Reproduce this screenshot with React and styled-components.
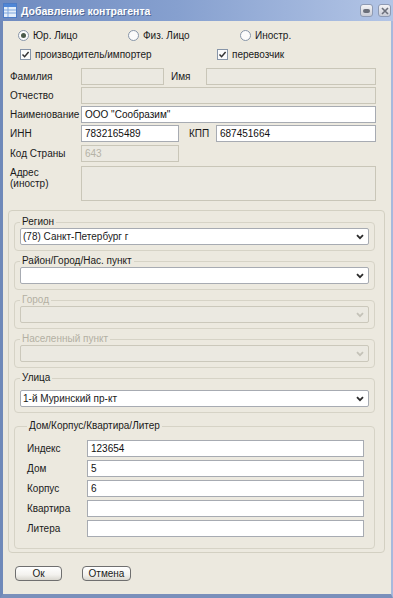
import React from "react";
import styled, { createGlobalStyle } from "styled-components";

const GlobalStyle = createGlobalStyle`
  html, body {
    margin: 0;
    padding: 0;
    background: #ffffff;
  }
  body {
    font-family: "Liberation Sans", Arial, sans-serif;
    font-size: 10px;
    color: #1a1a1a;
  }
`;

const Window = styled.div`
  width: 393px;
  height: 598px;
  display: flex;
  flex-direction: column;
  background: #ece9df;
`;

const TitleBar = styled.div`
  height: 21px;
  flex: none;
  display: flex;
  align-items: center;
  padding: 0 2px 0 3px;
  gap: 4px;
  background: linear-gradient(to right, #6f8bc0 0%, #86a0cf 45%, #b3c5e6 100%);
`;

const Title = styled.div`
  flex: 1;
  color: #ffffff;
  font-weight: 700;
  font-size: 10.5px;
  text-shadow: 1px 1px 0 rgba(40, 60, 100, 0.5);
`;

const TitleButton = styled.div`
  width: 13px;
  height: 13px;
  border-radius: 3px;
  background: linear-gradient(#f4f4f6, #c9ccd6);
  border: 1px solid #8e9ab3;
  box-sizing: border-box;
  display: flex;
  align-items: center;
  justify-content: center;
  margin-left: 1px;
`;

const Frame = styled.div`
  flex: 1;
  display: flex;
  flex-direction: column;
  border-left: 3px solid #6f89b9;
  border-right: 2px solid #a7b9dc;
  border-bottom: 4px solid #7a90bb;
  padding: 0 6px 0 5px;
`;

const OptionRow = styled.div`
  display: grid;
  grid-template-columns: ${(p) => p.$cols};
  align-items: center;
  height: 14px;
  margin-left: ${(p) => p.$left}px;
  margin-top: ${(p) => p.$top}px;
`;

const Option = styled.div`
  display: flex;
  align-items: center;
  gap: 4px;
  white-space: nowrap;
`;

const Radio = styled.span`
  width: 11px;
  height: 11px;
  box-sizing: border-box;
  border-radius: 50%;
  border: 1px solid #8795a8;
  background: #fbfbfb;
  display: flex;
  align-items: center;
  justify-content: center;
  &::after {
    content: "";
    width: 5px;
    height: 5px;
    border-radius: 50%;
    background: ${(p) => (p.$on ? "#4a5a4a" : "transparent")};
  }
`;

const Check = styled.span`
  width: 11px;
  height: 11px;
  box-sizing: border-box;
  border: 1px solid #8795a8;
  background: #fbfbfb;
  display: flex;
  align-items: center;
  justify-content: center;
`;

const Form = styled.div`
  display: flex;
  flex-direction: column;
  gap: 2px;
  margin: 7px 9px 0 2px;
`;

const Row = styled.div`
  display: flex;
  align-items: ${(p) => (p.$top ? "flex-start" : "center")};
  margin-top: ${(p) => p.$mt || 0}px;
`;

const Label = styled.div`
  flex: none;
  width: ${(p) => p.$w}px;
  padding-left: ${(p) => p.$pl || 0}px;
  box-sizing: border-box;
  line-height: 11px;
  padding-top: ${(p) => p.$pt || 0}px;
`;

const Field = styled.div`
  box-sizing: border-box;
  height: ${(p) => p.$h || 17}px;
  width: ${(p) => (p.$w ? `${p.$w}px` : "auto")};
  flex: ${(p) => (p.$w ? "none" : 1)};
  border: 1px solid ${(p) => (p.$disabled ? "#c9c6b8" : "#a7abb2")};
  background: ${(p) => (p.$disabled ? "#ebe9e1" : "#ffffff")};
  color: ${(p) => (p.$disabled ? "#b5b2a6" : "#111111")};
  padding: 0 3px;
  display: flex;
  align-items: center;
  white-space: nowrap;
`;

const Outer = styled.div`
  margin-top: 9px;
  border: 1px solid #d3d0c2;
  border-radius: 4px;
  padding: 5px 9px 3px 5px;
  display: flex;
  flex-direction: column;
  gap: 4px;
`;

const Group = styled.fieldset`
  margin: ${(p) => p.$mt || 0}px 0 0 0;
  padding: ${(p) => p.$pt || 0}px ${(p) => p.$pr || 5}px ${(p) => p.$pb || 5}px ${(p) => p.$pl || 5}px;
  border: 1px solid #d6d3c6;
  border-radius: 4px;
  min-width: 0;
`;

const Legend = styled.legend`
  padding: 0 2px;
  line-height: 12px;
  color: ${(p) => (p.$disabled ? "#b3b0a3" : "#1a1a1a")};
`;

const Select = styled.div`
  box-sizing: border-box;
  height: 17px;
  border: 1px solid ${(p) => (p.$disabled ? "#cbc8bb" : "#a7abb2")};
  border-radius: 2px;
  background: ${(p) => (p.$disabled ? "#ebe9e1" : "#ffffff")};
  display: flex;
  align-items: center;
  padding: 0 4px 0 2px;
  white-space: nowrap;
`;

const SelectText = styled.span`
  flex: 1;
`;

const HouseRows = styled.div`
  display: flex;
  flex-direction: column;
  gap: 3px;
`;

const Buttons = styled.div`
  display: flex;
  gap: 20px;
  margin: 13px 0 0 7px;
`;

const Button = styled.div`
  width: ${(p) => p.$w}px;
  height: 15px;
  box-sizing: border-box;
  border: 1px solid #6f6f6f;
  border-radius: 4px;
  background: linear-gradient(#ffffff 0%, #f3f2ee 60%, #d9d7cf 100%);
  display: flex;
  align-items: center;
  justify-content: center;
  font-size: 10px;
`;

const Chevron = ({ disabled }) => (
  <svg width="8" height="6" viewBox="0 0 8 6">
    <path
      d="M1 1.2 L4 4.2 L7 1.2"
      fill="none"
      stroke={disabled ? "#c4c2b8" : "#2b2b2b"}
      strokeWidth="1.8"
    />
  </svg>
);

const Tick = () => (
  <svg width="9" height="9" viewBox="0 0 9 9">
    <path d="M1.5 4.5 L3.6 6.7 L7.6 2" fill="none" stroke="#333" strokeWidth="1.5" />
  </svg>
);

const AppIcon = () => (
  <svg width="14" height="15" viewBox="0 0 14 15">
    <rect x="0.5" y="0.5" width="13" height="14" fill="#e4eefa" stroke="#4d7cc7" />
    <rect x="1" y="1" width="12" height="3" fill="#4f86d6" />
    <path d="M1 7 H13 M1 10 H13 M5 4 V14" stroke="#7fa6dd" strokeWidth="1" />
  </svg>
);

const Combo = ({ legend, value, disabled, pt }) => (
  <Group $pt={pt}>
    <Legend $disabled={disabled}>{legend}</Legend>
    <Select $disabled={disabled}>
      <SelectText>{value}</SelectText>
      <Chevron disabled={disabled} />
    </Select>
  </Group>
);

const houseFields = [
  ["Индекс", "123654"],
  ["Дом", "5"],
  ["Корпус", "6"],
  ["Квартира", ""],
  ["Литера", ""],
];

export default function App() {
  return (
    <>
      <GlobalStyle />
      <Window>
        <TitleBar>
          <AppIcon />
          <Title>Добавление контрагента</Title>
          <TitleButton>
            <svg width="7" height="4" viewBox="0 0 7 4">
              <rect x="0" y="0" width="7" height="4" rx="2" fill="#6b6f7a" />
            </svg>
          </TitleButton>
          <TitleButton>
            <svg width="8" height="8" viewBox="0 0 8 8">
              <path d="M1 1 L7 7 M7 1 L1 7" stroke="#6b6f7a" strokeWidth="1.6" />
            </svg>
          </TitleButton>
        </TitleBar>
        <Frame>
          <OptionRow $cols="110px 112px auto" $left={10} $top={7}>
            <Option>
              <Radio $on />
              Юр. Лицо
            </Option>
            <Option>
              <Radio />
              Физ. Лицо
            </Option>
            <Option>
              <Radio />
              Иностр.
            </Option>
          </OptionRow>
          <OptionRow $cols="197px auto" $left={12} $top={5}>
            <Option>
              <Check>
                <Tick />
              </Check>
              производитель/импортер
            </Option>
            <Option>
              <Check>
                <Tick />
              </Check>
              перевозчик
            </Option>
          </OptionRow>

          <Form>
            <Row>
              <Label $w={71}>Фамилия</Label>
              <Field $w={83} $disabled />
              <Label $w={42} $pl={7}>
                Имя
              </Label>
              <Field $disabled />
            </Row>
            <Row>
              <Label $w={71}>Отчество</Label>
              <Field $disabled />
            </Row>
            <Row>
              <Label $w={71}>Наименование</Label>
              <Field>ООО "Сообразим"</Field>
            </Row>
            <Row>
              <Label $w={71}>ИНН</Label>
              <Field $w={98}>7832165489</Field>
              <Label $w={37} $pl={10}>
                КПП
              </Label>
              <Field>687451664</Field>
            </Row>
            <Row $mt={1}>
              <Label $w={71}>Код Страны</Label>
              <Field $w={98} $disabled>
                643
              </Field>
            </Row>
            <Row $top $mt={2}>
              <Label $w={71} $pt={1}>
                Адрес
                <br />
                (иностр)
              </Label>
              <Field $disabled $h={35} />
            </Row>
          </Form>

          <Outer>
            <Combo legend="Регион" value="(78) Санкт-Петербург г" />
            <Combo legend="Район/Город/Нас. пункт" value="" />
            <Combo legend="Город" value="" disabled />
            <Combo legend="Населенный пункт" value="" disabled />
            <Combo legend="Улица" value="1-й Муринский пр-кт" pt={6} />
            <Group $mt={3} $pt={8} $pl={12} $pr={10} $pb={11}>
              <Legend>Дом/Корпус/Квартира/Литер</Legend>
              <HouseRows>
                {houseFields.map(([label, value]) => (
                  <Row key={label}>
                    <Label $w={60}>{label}</Label>
                    <Field>{value}</Field>
                  </Row>
                ))}
              </HouseRows>
            </Group>
          </Outer>

          <Buttons>
            <Button $w={47}>Ок</Button>
            <Button $w={49}>Отмена</Button>
          </Buttons>
        </Frame>
      </Window>
    </>
  );
}
